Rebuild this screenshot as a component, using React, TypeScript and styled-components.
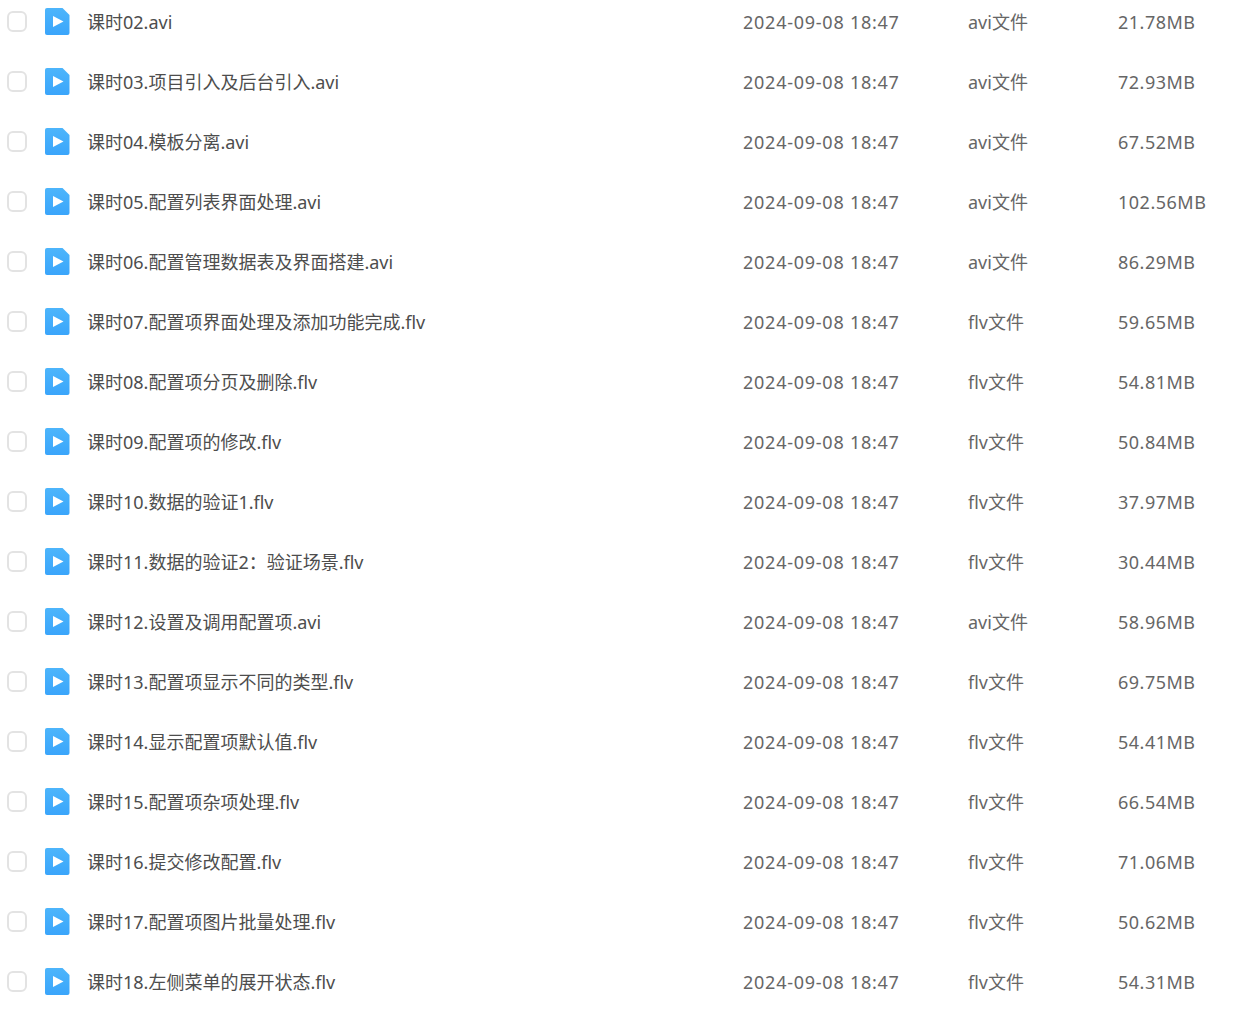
import React from 'react';
import styled, { createGlobalStyle } from 'styled-components';

const GlobalStyle = createGlobalStyle`
  html, body {
    margin: 0;
    height: 1011px;
    overflow: hidden;
    background: #fff;
    font-family: "Noto Sans", "Noto Sans CJK SC", sans-serif;
  }
`;

const files = [
  ['课时02.avi', 'avi文件', '21.78MB'],
  ['课时03.项目引入及后台引入.avi', 'avi文件', '72.93MB'],
  ['课时04.模板分离.avi', 'avi文件', '67.52MB'],
  ['课时05.配置列表界面处理.avi', 'avi文件', '102.56MB'],
  ['课时06.配置管理数据表及界面搭建.avi', 'avi文件', '86.29MB'],
  ['课时07.配置项界面处理及添加功能完成.flv', 'flv文件', '59.65MB'],
  ['课时08.配置项分页及删除.flv', 'flv文件', '54.81MB'],
  ['课时09.配置项的修改.flv', 'flv文件', '50.84MB'],
  ['课时10.数据的验证1.flv', 'flv文件', '37.97MB'],
  ['课时11.数据的验证2：验证场景.flv', 'flv文件', '30.44MB'],
  ['课时12.设置及调用配置项.avi', 'avi文件', '58.96MB'],
  ['课时13.配置项显示不同的类型.flv', 'flv文件', '69.75MB'],
  ['课时14.显示配置项默认值.flv', 'flv文件', '54.41MB'],
  ['课时15.配置项杂项处理.flv', 'flv文件', '66.54MB'],
  ['课时16.提交修改配置.flv', 'flv文件', '71.06MB'],
  ['课时17.配置项图片批量处理.flv', 'flv文件', '50.62MB'],
  ['课时18.左侧菜单的展开状态.flv', 'flv文件', '54.31MB'],
];

const VideoIcon = () => (
  <svg width="25" height="27" viewBox="0 0 25 27">
    <defs>
      <linearGradient id="fileBlue" x1="0" y1="0" x2="0" y2="1">
        <stop offset="0" stopColor="#4db5fb" />
        <stop offset="1" stopColor="#3aa5fb" />
      </linearGradient>
    </defs>
    <path d="M2 0H17.5L24.5 7V25a2 2 0 0 1-2 2H2a2 2 0 0 1-2-2V2a2 2 0 0 1 2-2Z" fill="url(#fileBlue)" />
    <path d="M8 8 18.5 13.5 8 19Z" fill="#fff" />
  </svg>
);

const App = () => (
  <>
    <GlobalStyle />
    <List>
      {files.map(([name, type, size]) => (
        <Row key={name}>
          <Check />
          <IconWrap>
            <VideoIcon />
          </IconWrap>
          <Name>{name}</Name>
          <Meta>2024-09-08 18:47</Meta>
          <Type>{type}</Type>
          <Size>{size}</Size>
        </Row>
      ))}
    </List>
  </>
);

export default App;

const List = styled.div`
  margin-top: -8px;
`;

const Row = styled.div`
  display: flex;
  align-items: center;
  height: 60px;
  padding-left: 7px;
  font-size: 18px;
  color: #666;
`;

const Check = styled.span`
  box-sizing: border-box;
  width: 20px;
  height: 21px;
  margin-bottom: 1px;
  border: 2px solid #e3e3e3;
  border-radius: 6px;
  margin-right: 18px;
`;

const IconWrap = styled.span`
  display: flex;
  width: 25px;
  height: 27px;
  margin-bottom: 1px;
  margin-right: 17px;
`;

const Name = styled.span`
  width: 656px;
  margin-bottom: 2px;
  color: #4d4d4d;
  white-space: nowrap;
`;

const Meta = styled.span`
  width: 225px;
  letter-spacing: 0.75px;
  white-space: nowrap;
`;

const Type = styled.span`
  width: 150px;
  margin-bottom: 2px;
  white-space: nowrap;
`;

const Size = styled.span`
  letter-spacing: 0.5px;
  white-space: nowrap;
`;
